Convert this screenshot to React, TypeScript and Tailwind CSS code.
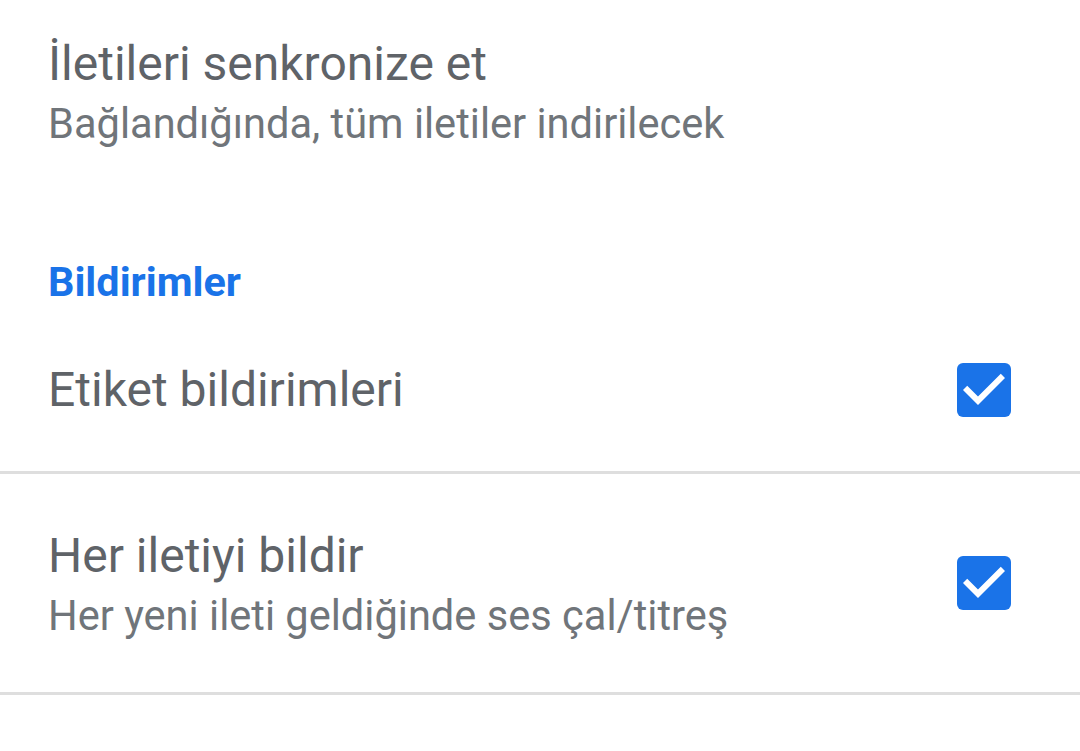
export default function App() {
  return (
    <div className="h-[751px] w-[1080px] overflow-hidden bg-white" style={{ fontFamily: "Roboto, 'Noto Sans', sans-serif" }}>
      <div className="px-[48px] pt-[36px]">
        <div className="text-[48px] leading-[56px] text-[#5f6368]">İletileri senkronize et</div>
        <div className="text-[41.6px] leading-[64px] text-[#70757a]">Bağlandığında, tüm iletiler indirilecek</div>
      </div>
      <div className="px-[48px] pt-[102px] text-[41.4px] font-bold leading-[48px] text-[#1a73e8]">Bildirimler</div>
      <div className="flex h-[168px] items-center justify-between border-b-[3px] border-[#dedede] pt-[3px] pl-[48px] pr-[69px]">
        <div className="text-[48px] leading-[56px] text-[#5f6368]">Etiket bildirimleri</div>
        <Check />
      </div>
      <div className="flex h-[221px] items-center justify-between border-b-[3px] border-[#dedede] pl-[48px] pr-[69px]">
        <div className="pt-[10px]">
          <div className="text-[48px] leading-[56px] text-[#5f6368]">Her iletiyi bildir</div>
          <div className="text-[41.6px] leading-[64px] text-[#70757a]">Her yeni ileti geldiğinde ses çal/titreş</div>
        </div>
        <Check />
      </div>
    </div>
  );
}

function Check() {
  return (
    <svg viewBox="3 3 18 18" className="h-[54px] w-[54px]">
      <rect x="3" y="3" width="18" height="18" rx="2" fill="#1a73e8" />
      <path d="M10 17l-5-5 1.41-1.41L10 14.17l7.59-7.59L19 8l-9 9z" fill="white" />
    </svg>
  );
}
